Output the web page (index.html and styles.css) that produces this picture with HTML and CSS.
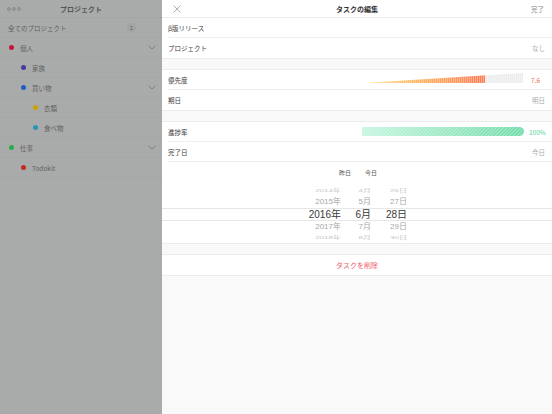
FILE: index.html
```html
<!DOCTYPE html>
<html lang="ja">
<head>
<meta charset="utf-8">
<link rel="stylesheet" href="styles.css">
</head>
<body>
<div class="app">
  <aside class="sidebar">
    <div class="sb-head">
      <svg class="dots" width="14" height="4" viewBox="0 0 14 4"><circle cx="2" cy="2" r="1.4"/><circle cx="7" cy="2" r="1.4"/><circle cx="12" cy="2" r="1.4"/></svg>
      <span class="sb-title">プロジェクト</span>
    </div>
    <div class="sb-row all"><span class="sb-label">全てのプロジェクト</span><span class="badge">2</span></div>
    <div class="sb-row lv0"><i class="dot red"></i><span class="sb-label">個人</span><svg class="chev" width="8" height="5" viewBox="0 0 8 5"><path d="M0.5 0.8 L4 4 L7.5 0.8"/></svg></div>
    <div class="sb-row lv1"><i class="dot purple"></i><span class="sb-label">家族</span></div>
    <div class="sb-row lv1"><i class="dot blue"></i><span class="sb-label">買い物</span><svg class="chev" width="8" height="5" viewBox="0 0 8 5"><path d="M0.5 0.8 L4 4 L7.5 0.8"/></svg></div>
    <div class="sb-row lv2"><i class="dot yellow"></i><span class="sb-label">衣類</span></div>
    <div class="sb-row lv2"><i class="dot teal"></i><span class="sb-label">食べ物</span></div>
    <div class="sb-row lv0"><i class="dot green"></i><span class="sb-label">仕事</span><svg class="chev" width="8" height="5" viewBox="0 0 8 5"><path d="M0.5 0.8 L4 4 L7.5 0.8"/></svg></div>
    <div class="sb-row lv1"><i class="dot red2"></i><span class="sb-label">Todokit</span></div>
  </aside>

  <main class="editor">
    <header class="ed-head">
      <svg class="close" width="8" height="8" viewBox="0 0 8 8"><path d="M0.5 0.5 L7.5 7.5 M7.5 0.5 L0.5 7.5"/></svg>
      <span class="ed-title">タスクの編集</span>
      <span class="done">完了</span>
    </header>

    <section class="group">
      <div class="row"><span class="label">β版リリース</span></div>
      <div class="row last"><span class="label">プロジェクト</span><span class="value">なし</span></div>
    </section>

    <section class="group">
      <div class="row">
        <span class="label">優先度</span>
        <svg class="prio" width="158" height="10" viewBox="0 0 158 10">
          <defs>
            <linearGradient id="pg" x1="0" x2="1" y1="0" y2="0">
              <stop offset="0" stop-color="#ffe08a"/>
              <stop offset="0.45" stop-color="#ffb45c"/>
              <stop offset="1" stop-color="#ff7a58"/>
            </linearGradient>
            <pattern id="vs" width="2" height="10" patternUnits="userSpaceOnUse">
              <rect x="0" y="0" width="1" height="10" fill="#ffffff" fill-opacity="0.35"/>
            </pattern>
            <clipPath id="wedge"><polygon points="0,10 158,0 158,10"/></clipPath>
          </defs>
          <g clip-path="url(#wedge)">
            <rect x="0" y="0" width="120" height="10" fill="url(#pg)"/>
            <rect x="120" y="0" width="38" height="10" fill="#ececec"/>
            <rect x="0" y="0" width="158" height="10" fill="url(#vs)"/>
          </g>
        </svg>
        <span class="num prio-num">7.6</span>
      </div>
      <div class="row last"><span class="label">期日</span><span class="value">明日</span></div>
    </section>

    <section class="group">
      <div class="row">
        <span class="label">進捗率</span>
        <svg class="prog" width="162" height="9" viewBox="0 0 162 9">
          <defs>
            <linearGradient id="gg" x1="0" x2="1" y1="0" y2="0">
              <stop offset="0" stop-color="#c4f5de"/>
              <stop offset="1" stop-color="#6cdaa6"/>
            </linearGradient>
            <pattern id="hatch" width="2.5" height="2.5" patternUnits="userSpaceOnUse" patternTransform="rotate(45)">
              <rect x="0" y="0" width="1" height="2.5" fill="#ffffff" fill-opacity="0.4"/>
            </pattern>
          </defs>
          <path d="M0 0 H157.5 A4.5 4.5 0 0 1 157.5 9 H0 Z" fill="url(#gg)"/>
          <path d="M0 0 H157.5 A4.5 4.5 0 0 1 157.5 9 H0 Z" fill="url(#hatch)"/>
        </svg>
        <span class="num prog-num">100%</span>
      </div>
      <div class="row"><span class="label">完了日</span><span class="value">今日</span></div>

      <div class="picker">
        <div class="quick"><span>昨日</span><span>今日</span></div>
        <div class="wheel">
          <div class="prow far top"><span class="c-y">2014年</span><span class="c-m">4月</span><span class="c-d">26日</span></div>
          <div class="prow near"><span class="c-y">2015年</span><span class="c-m">5月</span><span class="c-d">27日</span></div>
          <div class="prow sel"><span class="c-y">2016年</span><span class="c-m">6月</span><span class="c-d">28日</span></div>
          <div class="prow near"><span class="c-y">2017年</span><span class="c-m">7月</span><span class="c-d">29日</span></div>
          <div class="prow far bottom"><span class="c-y">2018年</span><span class="c-m">8月</span><span class="c-d">30日</span></div>
        </div>
      </div>
    </section>

    <section class="group">
      <div class="row last delete"><span>タスクを削除</span></div>
    </section>
  </main>
</div>
</body>
</html>
```

FILE: styles.css
```css
* { box-sizing: border-box; margin: 0; padding: 0; }
html, body { width: 552px; height: 414px; overflow: hidden; }
body {
  font-family: "Noto Sans CJK JP", "Noto Sans", sans-serif;
  font-size: 7px;
  color: #3a3a3a;
  background: #f9f9f9;
}
.app { display: flex; width: 552px; height: 414px; }

/* sidebar */
.sidebar {
  width: 162px;
  flex: none;
  background: #a9abaa;
  color: #5f6160;
}
.sb-head {
  position: relative;
  height: 18px;
  display: flex;
  align-items: center;
  justify-content: center;
  border-bottom: 1px solid #a4a6a5;
}
.dots { position: absolute; left: 7px; top: 7px; fill: none; stroke: #7c7e7d; stroke-width: 0.8; }
.sb-title { font-weight: bold; font-size: 7px; color: #555756; }
.sb-row {
  height: 20px;
  display: flex;
  align-items: center;
  border-bottom: 1px solid #a5a7a6;
  padding-right: 6px;
}
.sb-row.all { padding-left: 8px; }
.sb-row.lv0 { padding-left: 9px; }
.sb-row.lv1 { padding-left: 21px; }
.sb-row.lv2 { padding-left: 33px; }
.sb-label { flex: 1; font-size: 6.5px; }
.dot {
  width: 5px; height: 5px; border-radius: 50%;
  margin-right: 6px; flex: none;
}
.dot.red { background: #c4163c; }
.dot.purple { background: #4a38a6; }
.dot.blue { background: #1f5cc4; }
.dot.yellow { background: #c8a206; }
.dot.teal { background: #2a93bd; }
.dot.green { background: #2eab4a; }
.dot.red2 { background: #c42a22; }
.badge {
  width: 9px; height: 9px; border-radius: 50%;
  background: #a1a3a2;
  font-size: 5px;
  display: flex; align-items: center; justify-content: center;
  margin-right: 20px;
}
.chev { fill: none; stroke: #6f7170; stroke-width: 0.8; }

/* editor */
.editor { flex: 1; background: #f9f9f9; }
.ed-head {
  position: relative;
  height: 18px;
  background: #fff;
  border-bottom: 1px solid #ececec;
  display: flex; align-items: center; justify-content: center;
}
.close { position: absolute; left: 11px; top: 5px; fill: none; stroke: #9a9a9a; stroke-width: 0.8; }
.ed-title { font-weight: bold; font-size: 7px; color: #333; }
.done { position: absolute; right: 8px; top: 4px; color: #888; font-size: 6.5px; }

.group {
  background: #fff;
  border-top: 1px solid #ececec;
  border-bottom: 1px solid #ececec;
  margin-bottom: 10px;
  padding-left: 6px;
}
.ed-head + .group { border-top: none; }
.row {
  height: 20px;
  display: flex; align-items: center;
  border-bottom: 1px solid #efefef;
  padding-right: 7px;
}
.row.last { border-bottom: none; }
.label { flex: 1; font-size: 6.5px; color: #3c3c3c; }
.value { font-size: 6.5px; color: #aaa; }
.prio { margin-right: 6px; margin-top: -3px; }
.prog { margin-right: 5px; }
.num { font-size: 6.5px; text-align: right; }
.prio-num { color: #f26b4f; width: 16px; padding-right: 5px; }
.prog-num { color: #4fd49a; width: 16px; }

.picker { height: 81px; margin-left: -6px; }
.quick {
  display: flex; gap: 14px;
  padding-left: 177px;
  padding-top: 6px;
  height: 24px;
  font-size: 6px;
  color: #555;
}
.wheel { display: flex; flex-direction: column; }
.prow {
  display: flex;
  color: #b8b8b8;
  font-family: "Liberation Sans", "Noto Sans CJK JP", sans-serif;
}
.c-y { width: 179px; text-align: right; }
.c-m { width: 30px; text-align: right; }
.c-d { width: 36px; text-align: right; }
.prow.far { height: 10px; font-size: 8px; line-height: 10px; transform: scaleY(0.55); color: #c4c4c4; }
.prow.near { height: 12px; font-size: 8px; line-height: 12px; color: #a8a8a8; }
.prow.sel {
  height: 13px; font-size: 10px; line-height: 11px; color: #3a3a3a;
  border-top: 1px solid #e6e6e6; border-bottom: 1px solid #e6e6e6;
}
.delete { justify-content: center; color: #f25b6b; font-size: 7px; padding-right: 6px; }
```
